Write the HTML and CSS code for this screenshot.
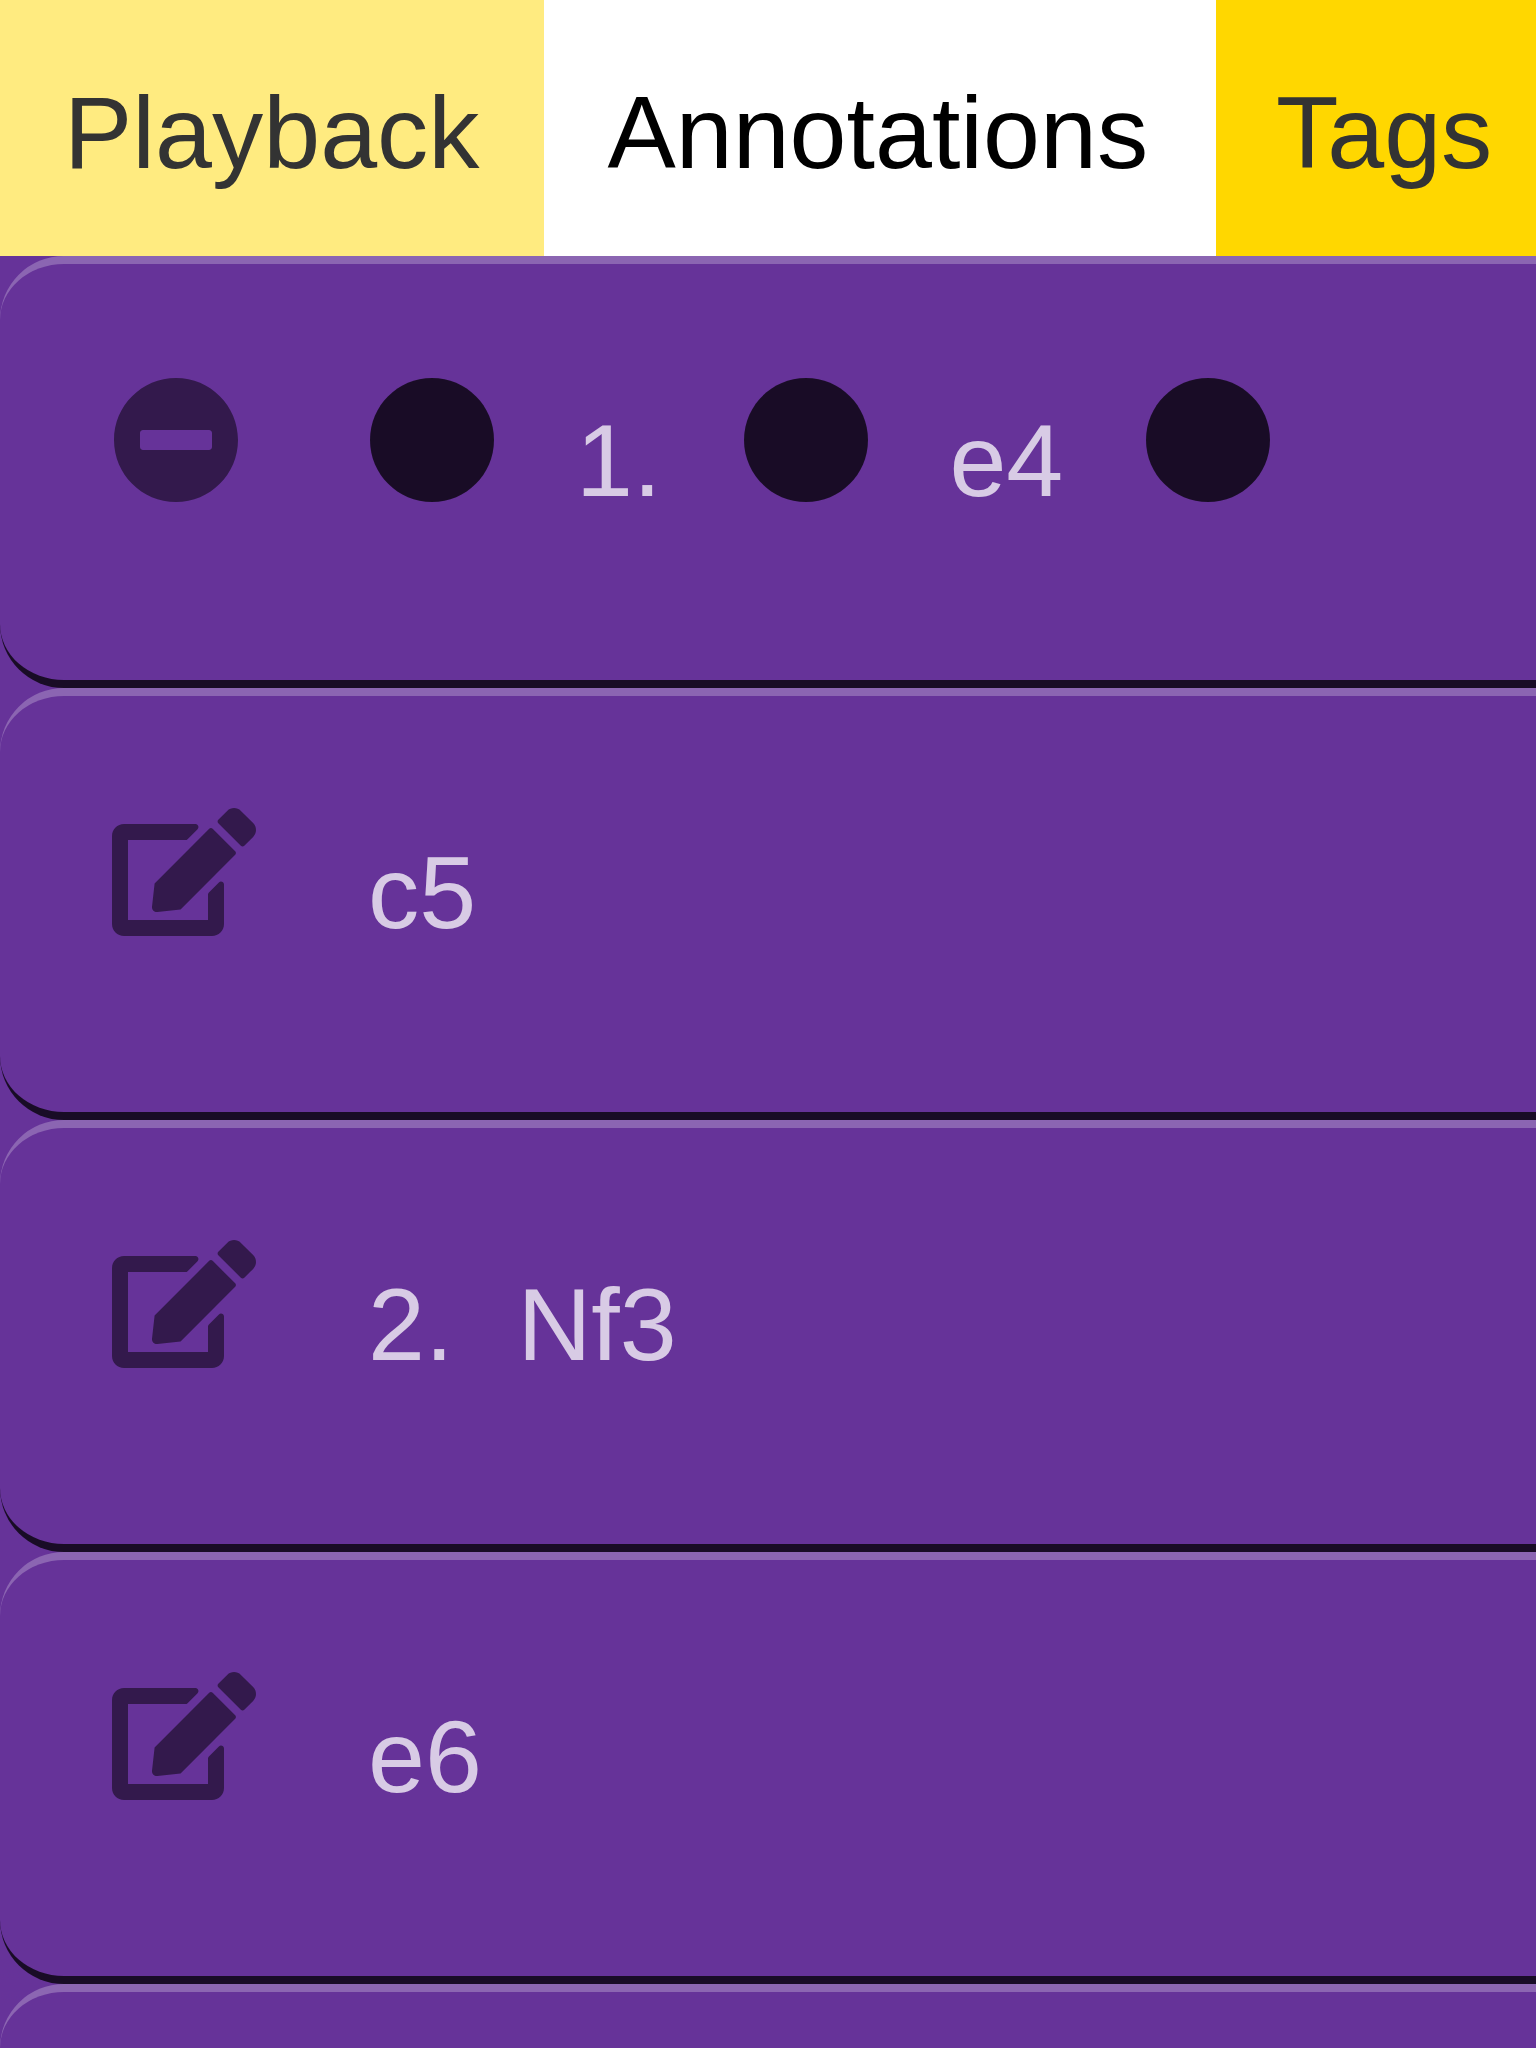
FILE: index.html
```html
<!DOCTYPE html>
<html lang="en">
<head>
<meta charset="utf-8">
<title>Annotations</title>
<link rel="stylesheet" href="styles.css">
</head>
<body>
<svg class="sprite" aria-hidden="true">
  <symbol id="circle" viewBox="0 0 512 512"><path d="M256 8C119 8 8 119 8 256s111 248 248 248 248-111 248-248S393 8 256 8z"/></symbol>
  <symbol id="minus" viewBox="0 0 512 512"><path d="M256 8C119 8 8 119 8 256s111 248 248 248 248-111 248-248S393 8 256 8zM124 296c-6.600 0-12-5.400-12-12v-56c0-6.600 5.400-12 12-12h264c6.600 0 12 5.400 12 12v56c0 6.600-5.400 12-12 12H124z"/></symbol>
  <symbol id="edit" viewBox="0 0 576 512"><path d="M402.600 83.200l90.200 90.200c3.800 3.800 3.800 10 0 13.800L274.400 405.600l-92.800 10.300c-12.400 1.400-22.900-9.100-21.500-21.500l10.300-92.800L388.800 83.200c3.800-3.800 10-3.800 13.800 0zm162-22.900l-48.800-48.800c-15.200-15.200-39.900-15.200-55.200 0l-35.400 35.400c-3.800 3.800-3.800 10 0 13.800l90.200 90.200c3.800 3.800 10 3.800 13.800 0l35.400-35.400c15.200-15.300 15.200-40 0-55.200zM384 346.200V448H64V128h229.800c3.200 0 6.200-1.300 8.500-3.500l40-40c7.600-7.600 2.200-20.500-8.500-20.500H48C21.500 64 0 85.500 0 112v352c0 26.500 21.500 48 48 48h352c26.500 0 48-21.500 48-48V306.200c0-10.700-12.900-16-20.500-8.500l-40 40c-2.200 2.300-3.500 5.300-3.500 8.500z"/></symbol>
</svg>
<nav class="tabs">
  <a class="tab tab-playback">Playback</a>
  <a class="tab tab-annotations">Annotations</a>
  <a class="tab tab-tags">Tags</a>
</nav>
<main class="moves">
  <section class="row">
    <div class="tool"><svg class="icon"><use href="#minus"/></svg></div>
    <div class="line">
      <svg class="icon mark"><use href="#circle"/></svg>
      <span class="text">1.</span>
      <svg class="icon mark"><use href="#circle"/></svg>
      <span class="text">e4</span>
      <svg class="icon mark"><use href="#circle"/></svg>
    </div>
  </section>
  <section class="row">
    <div class="tool"><svg class="icon icon-edit"><use href="#edit"/></svg></div>
    <div class="line"><span class="text">c5</span></div>
  </section>
  <section class="row">
    <div class="tool"><svg class="icon icon-edit"><use href="#edit"/></svg></div>
    <div class="line"><span class="text">2.</span><span class="text">Nf3</span></div>
  </section>
  <section class="row">
    <div class="tool"><svg class="icon icon-edit"><use href="#edit"/></svg></div>
    <div class="line"><span class="text">e6</span></div>
  </section>
  <section class="row row-last"></section>
</main>
</body>
</html>
```
FILE: styles.css
```css
* { box-sizing: border-box; }

html, body { height: 100%; }

body {
  margin: 0;
  overflow: hidden;
  background: #663399;
  font-family: "Liberation Sans", Arial, sans-serif;
  font-size: 102.4px;
  line-height: 115px;
}

.sprite { display: none; }

.tabs {
  display: flex;
  height: 256px;
  background: gold;
}

.tab {
  flex: none;
  padding: 75px 0 0 64px;
  color: #333;
}

.tab-playback { width: 544px; background: #ffeb80; }
.tab-annotations { width: 672px; padding-left: 63.4px; background: #fff; color: #000; }
.tab-tags { flex: 1; padding-left: 60px; }

.row {
  display: flex;
  height: 432px;
  padding: 112px 0 0 112px;
  border-top: 8px solid rgba(255, 255, 255, 0.25);
  border-bottom: 8px solid rgba(0, 0, 0, 0.75);
  border-radius: 64px 0 0 64px;
}

.row-last {
  height: 64px;
  padding: 0;
  border-bottom: 0;
  border-radius: 64px 0 0 0;
}

.tool { width: 256px; color: rgba(0, 0, 0, 0.5); }

.icon {
  display: block;
  flex: none;
  width: 128px;
  height: 128px;
  fill: currentColor;
}

.icon-edit { width: 144px; }

.line {
  display: flex;
  align-items: flex-start;
  gap: 64px;
  color: rgba(255, 255, 255, 0.75);
}

.mark { margin: 0 15.4px 0 16.6px; color: rgba(0, 0, 0, 0.75); }
.mark:first-child { margin: 0 16px 0 0; }

.text { padding-top: 27px; }
```
